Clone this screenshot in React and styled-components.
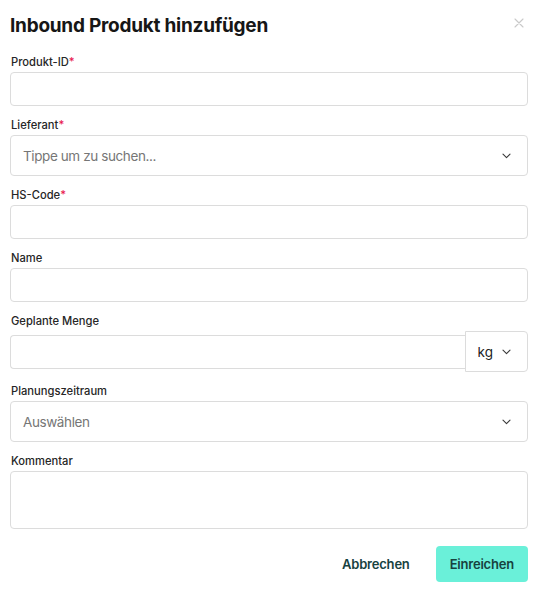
import React from 'react'
import styled, { createGlobalStyle } from 'styled-components'

const GlobalStyle = createGlobalStyle`
    html, body {
        margin: 0;
        padding: 0;
        background: #ffffff;
    }
    body {
        font-family: Inter, "Noto Sans", "Liberation Sans", sans-serif;
        color: #1d1d1d;
    }
    * {
        box-sizing: border-box;
    }
`

const Modal = styled.div`
    width: 539px;
    padding: 11px 11px 14px 10px;
    display: flex;
    flex-direction: column;
`

const Header = styled.div`
    display: flex;
    align-items: flex-start;
    justify-content: space-between;
    margin-bottom: 14px;
`

const Title = styled.h2`
    margin: 1px 0 0;
    font-size: 19px;
    line-height: 28px;
    font-weight: 700;
    letter-spacing: -0.25px;
    color: #161616;
`

const CloseButton = styled.button`
    border: 0;
    background: none;
    padding: 0;
    margin: 7px 4px 0 0;
    width: 10px;
    height: 10px;
    display: flex;
    cursor: pointer;
`

const Form = styled.form`
    display: flex;
    flex-direction: column;
    gap: 11px;
`

const Field = styled.div`
    display: flex;
    flex-direction: column;
    gap: 2px;
`

const Label = styled.label`
    font-size: 11.2px;
    line-height: 16px;
    font-weight: 500;
    color: #262626;
    padding-left: 1px;
`

const Required = styled.span`
    color: #e8174f;
`

const Input = styled.input`
    width: 100%;
    height: 34px;
    border: 1px solid #dcdcdc;
    border-radius: 4px;
    padding: 0 12px;
    font: inherit;
    font-size: 13.5px;
    outline: none;
`

const TextArea = styled.textarea`
    width: 100%;
    height: 58px;
    border: 1px solid #dcdcdc;
    border-radius: 4px;
    padding: 8px 12px;
    font: inherit;
    font-size: 13.5px;
    resize: none;
    outline: none;
`

const Select = styled.div`
    height: 41px;
    border: 1px solid #dcdcdc;
    border-radius: ${props => props.$attached ? '0 4px 4px 0' : '4px'};
    padding: 0 16px 0 12px;
    display: flex;
    align-items: center;
    justify-content: space-between;
    gap: ${props => props.$attached ? '9px' : '0'};
    flex-shrink: 0;
    font-size: 13.5px;
    letter-spacing: ${props => props.$value ? '0' : '-0.4px'};
    color: ${props => props.$value ? '#222222' : '#767676'};
`

const AmountRow = styled.div`
    display: flex;
    align-items: center;
`

const AmountInput = styled(Input)`
    flex: 1;
    border-right: 0;
    border-radius: 4px 0 0 4px;
`

const Footer = styled.div`
    display: flex;
    justify-content: flex-end;
    align-items: center;
    gap: 10px;
    margin-top: 17px;
`

const Button = styled.button`
    height: 36px;
    padding: 0 ${props => props.$primary ? '14px' : '16px'};
    border: 0;
    border-radius: 4px;
    font-family: inherit;
    font-size: 13px;
    font-weight: 600;
    letter-spacing: -0.2px;
    color: #17423f;
    background: ${props => props.$primary ? '#6af0d9' : 'transparent'};
    cursor: pointer;
`

const Chevron = () => (
    <svg width="9" height="6" viewBox="0 0 9 6" fill="none">
        <path d="M1 1.2L4.5 4.6L8 1.2" stroke="#3a3a3a" strokeWidth="1.1" strokeLinecap="round" strokeLinejoin="round" />
    </svg>
)

const CloseIcon = () => (
    <svg width="10" height="10" viewBox="0 0 10 10" fill="none">
        <path d="M1 1L9 9M9 1L1 9" stroke="#c9c9c9" strokeWidth="1.1" strokeLinecap="round" />
    </svg>
)

export default function App() {
    return (
        <>
            <GlobalStyle />
            <Modal>
                <Header>
                    <Title>Inbound Produkt hinzufügen</Title>
                    <CloseButton aria-label="Schließen"><CloseIcon /></CloseButton>
                </Header>
                <Form>
                    <Field>
                        <Label>Produkt-ID<Required>*</Required></Label>
                        <Input />
                    </Field>
                    <Field>
                        <Label>Lieferant<Required>*</Required></Label>
                        <Select>
                            <span>Tippe um zu suchen...</span>
                            <Chevron />
                        </Select>
                    </Field>
                    <Field>
                        <Label>HS-Code<Required>*</Required></Label>
                        <Input />
                    </Field>
                    <Field>
                        <Label>Name</Label>
                        <Input />
                    </Field>
                    <Field>
                        <Label>Geplante Menge</Label>
                        <AmountRow>
                            <AmountInput />
                            <Select $attached $value>
                                <span>kg</span>
                                <Chevron />
                            </Select>
                        </AmountRow>
                    </Field>
                    <Field>
                        <Label>Planungszeitraum</Label>
                        <Select>
                            <span>Auswählen</span>
                            <Chevron />
                        </Select>
                    </Field>
                    <Field>
                        <Label>Kommentar</Label>
                        <TextArea />
                    </Field>
                </Form>
                <Footer>
                    <Button type="button">Abbrechen</Button>
                    <Button type="button" $primary>Einreichen</Button>
                </Footer>
            </Modal>
        </>
    )
}
